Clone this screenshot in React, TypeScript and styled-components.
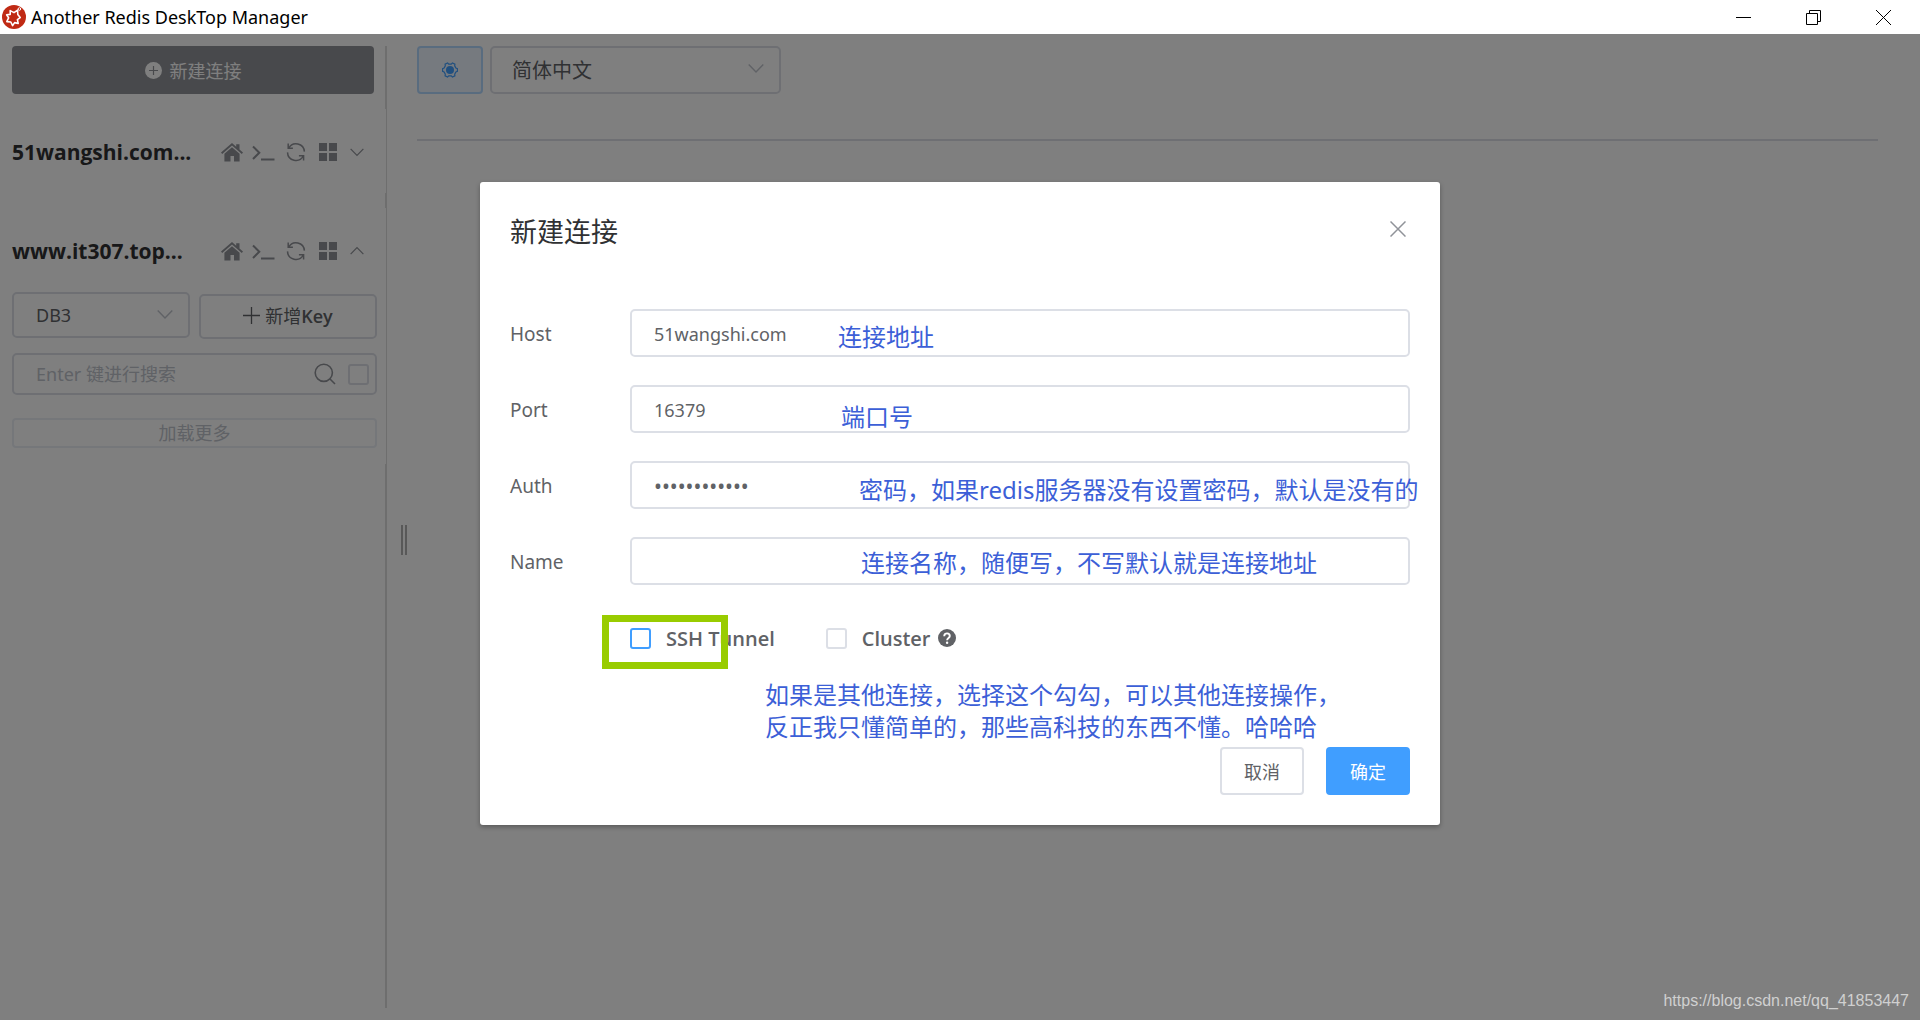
import React from 'react';
import styled, { createGlobalStyle, css } from 'styled-components';

const sans = `"Noto Sans", "Noto Sans CJK SC", sans-serif`;
const semi = `"Open Sans", "Noto Sans CJK SC", sans-serif`;

const GlobalStyle = createGlobalStyle`
  *, *::before, *::after { box-sizing: border-box; }
  body { margin: 0; font-family: ${sans}; color: #606266; background: #fff; }
  button, input, select { font: inherit; color: inherit; margin: 0; }
  button { cursor: pointer; }
`;

const Window = styled.div`
  display: flex;
  flex-direction: column;
  min-height: 100vh;
`;

const TitleBar = styled.header`
  display: flex;
  align-items: center;
  height: 34px;
  padding: 0 2px;
  background: #fff;
  color: #000;
`;

const AppName = styled.h1`
  flex: 1;
  margin: 0;
  padding-left: 5px;
  font-size: 18px;
  line-height: 24px;
  font-weight: 400;
`;

const WindowButton = styled.button`
  display: grid;
  place-items: center;
  width: 70px;
  height: 34px;
  padding: 0;
  border: 0;
  background: none;
`;

const Workspace = styled.div`
  position: relative;
  flex: 1;
  display: flex;
  padding: 12px 0;
`;

const Sidebar = styled.aside`
  display: flex;
  flex-direction: column;
  gap: 15px;
  width: 387px;
  padding-left: 12px;
  border-right: 2px solid #dcdcdc;
`;

const NewConnection = styled.button`
  display: flex;
  align-items: center;
  justify-content: center;
  gap: 8px;
  height: 48px;
  margin-right: 11px;
  border: 0;
  border-radius: 4px;
  background: #909399;
  color: #fff;
  font-size: 18px;
`;

const Connection = styled.section`
  margin-right: -1px;
  background: #fff;
`;

const ConnectionHead = styled.div`
  display: flex;
  align-items: center;
  height: 84px;
  padding: 2px 16px 0 0;
`;

const ConnectionName = styled.h2`
  flex: 1;
  margin: 0;
  color: #303133;
  font-family: ${semi};
  font-size: 21px;
  line-height: 30px;
  font-weight: 700;
  white-space: nowrap;
`;

const IconButton = styled.button<{ $narrow?: boolean }>`
  display: grid;
  place-items: center;
  width: ${p => (p.$narrow ? 26 : 32)}px;
  height: 32px;
  padding: 0;
  border: 0;
  background: none;
  color: #909399;
`;

const KeyTools = styled.div`
  display: grid;
  grid-template-columns: 1fr 1fr;
  column-gap: 9px;
  row-gap: 14px;
  padding: 0 9px 16px 0;
`;

const outlined = css`
  border: 2px solid #dcdfe6;
  border-radius: 5px;
  background: #fff;
`;

const SelectBox = styled.span<{ $wide?: boolean }>`
  position: relative;
  display: block;
  width: ${p => (p.$wide ? '291px' : 'auto')};
  color: #c0c4cc;

  svg {
    position: absolute;
    right: 17px;
    top: 50%;
    margin-top: -10px;
    pointer-events: none;
  }
`;

const Select = styled.select<{ $large?: boolean }>`
  ${outlined}
  appearance: none;
  width: 100%;
  height: ${p => (p.$large ? 48 : 46)}px;
  padding: 0 48px 0 ${p => (p.$large ? 20 : 22)}px;
  color: #606266;
  font-size: ${p => (p.$large ? 20 : 18)}px;
`;

const AddKey = styled.button`
  ${outlined}
  display: flex;
  align-items: center;
  justify-content: center;
  gap: 5px;
  height: 45px;
  margin-top: 2px;
  font-family: ${semi};
  font-size: 18px;
  line-height: 24px;
  padding: 0 0 2px;

  b { font-size: 18px; font-weight: 600; }
`;

const SearchBar = styled.div`
  ${outlined}
  grid-column: 1 / -1;
  display: flex;
  align-items: center;
  gap: 12px;
  height: 42px;
  padding: 0 6px 0 22px;
  color: #909399;
`;

const SearchInput = styled.input`
  flex: 1;
  min-width: 0;
  padding: 0;
  border: 0;
  outline: 0;
  background: none;
  font-size: 18px;

  &::placeholder { color: #c0c4cc; opacity: 1; }
`;

const CheckBox = styled.input<{ $focused?: boolean }>`
  appearance: none;
  width: 21px;
  height: 21px;
  border: 2px solid ${p => (p.$focused ? '#409eff' : '#dcdfe6')};
  border-radius: 3px;
  background: #fff;
`;

const LoadMore = styled.button`
  grid-column: 1 / -1;
  height: 30px;
  margin-top: 9px;
  padding: 0;
  border: 2px solid #ebeef5;
  border-radius: 4px;
  background: #fff;
  color: #c0c4cc;
  font-size: 18px;
  line-height: 24px;
`;

const Splitter = styled.div`
  display: flex;
  align-items: center;
  justify-content: center;
  width: 30px;
  padding: 26px 0 0 4px;
`;

const Grip = styled.span`
  width: 6px;
  height: 30px;
  border: solid #b0b0b0;
  border-width: 0 2px;
`;

const Main = styled.main`
  flex: 1;
  padding-right: 42px;
`;

const Toolbar = styled.div`
  display: flex;
  align-items: center;
  gap: 7px;
  padding-bottom: 45px;
  border-bottom: 2px solid #dcdfe6;
`;

const SettingsButton = styled.button`
  display: grid;
  place-items: center;
  width: 66px;
  height: 48px;
  border: 2px solid #b3d8ff;
  border-radius: 4px;
  background: #ecf5ff;
  color: #409eff;
`;

const Overlay = styled.div`
  position: absolute;
  inset: 0;
  background: rgba(0, 0, 0, 0.5);
`;

const Dialog = styled.section`
  width: 50%;
  margin: 148px auto 0;
  padding: 30px;
  border-radius: 3px;
  background: #fff;
  box-shadow: 0 2px 5px rgba(0, 0, 0, 0.3);
`;

const DialogHead = styled.div`
  display: flex;
  align-items: flex-start;
  justify-content: space-between;
  margin-bottom: 58px;
`;

const DialogTitle = styled.h2`
  margin: 0;
  color: #303133;
  font-size: 27px;
  line-height: 39px;
  font-weight: 400;
`;

const CloseButton = styled.button`
  display: grid;
  place-items: center;
  width: 24px;
  height: 34px;
  padding: 0;
  border: 0;
  background: none;
  color: #909399;
`;

const Form = styled.form`
  display: flex;
  flex-direction: column;
`;

const Field = styled.div`
  position: relative;
  display: flex;
  align-items: center;
  margin-bottom: 28px;
`;

const Label = styled.label`
  width: 120px;
  padding-top: 2px;
  font-size: 19px;
`;

const TextInput = styled.input`
  ${outlined}
  flex: 1;
  height: 48px;
  padding: 2px 22px 0;
  font-size: 18px;
  outline: 0;

  &[type='password'] { font-size: 21px; }
`;

const handwriting = css`
  color: #3c5fd7;
  font-size: 24px;
  line-height: 32px;
  white-space: nowrap;
`;

const Remark = styled.span<{ $x: number; $y: number }>`
  ${handwriting}
  position: absolute;
  left: ${p => p.$x}px;
  top: ${p => p.$y}px;
  pointer-events: none;
`;

const Options = styled.div`
  position: relative;
  display: flex;
  align-items: center;
  gap: 51px;
  height: 48px;
  padding: 2px 0 0 120px;
`;

const Option = styled.label`
  display: flex;
  align-items: center;
  gap: 15px;
  font-family: ${semi};
  font-size: 20px;
  font-weight: 600;
`;

const OptionText = styled.span`
  display: flex;
  align-items: center;
  gap: 7px;
`;

const Highlight = styled.span`
  position: absolute;
  left: 92px;
  top: 2px;
  width: 126px;
  height: 54px;
  border: 7px solid #99cc00;
  pointer-events: none;
`;

const Note = styled.p`
  ${handwriting}
  margin: 18px 0 4px 255px;
`;

const Actions = styled.div`
  display: flex;
  justify-content: flex-end;
  gap: 22px;
`;

const ActionButton = styled.button<{ $primary?: boolean }>`
  width: 84px;
  height: 48px;
  padding: 0;
  border: 2px solid ${p => (p.$primary ? '#409eff' : '#dcdfe6')};
  border-radius: 4px;
  background: ${p => (p.$primary ? '#409eff' : '#fff')};
  color: ${p => (p.$primary ? '#fff' : '#606266')};
  font-size: 18px;
`;

const Watermark = styled.span`
  position: absolute;
  right: 11px;
  bottom: 8px;
  color: #d0d0d0;
  font-family: "Liberation Sans", sans-serif;
  font-size: 16px;
  line-height: 22px;
`;

const Logo = () => (
  <svg width="24" height="24" viewBox="0 0 24 24" aria-hidden="true">
    <circle cx="12" cy="12" r="12" fill="#c02a14" />
    <path
      d="M8.200 5.600 12 7.600 15.600 5.200 15.800 9.400 18.200 12.600 15.400 14.600 16.200 18.400 12.600 17.600 10.600 20.600 8.800 17 4.800 16.600 6.600 12.800 4.600 9.800 8.200 9.400Z"
      fill="none" stroke="#fff" strokeWidth="1.6" strokeLinejoin="round"
    />
    <circle cx="17.4" cy="4" r="1.3" fill="none" stroke="#fff" />
  </svg>
);

const Chevron = ({ up, small }: { up?: boolean; small?: boolean }) => (
  <svg width={small ? 14 : 16} height={small ? 14 : 16} viewBox="0 0 18 18" fill="none" stroke="currentColor" strokeWidth="1.6" aria-hidden="true">
    <path d={up ? 'M.8 13 9 4.6l8.200 8.400' : 'M.8 5 9 13.400 17.200 5'} />
  </svg>
);

const HomeIcon = () => (
  <svg width="22" height="19" viewBox="0 0 22 19" fill="currentColor" aria-hidden="true">
    <path d="M11 0 15.200 3.700V1.300h3.300V6.600L22 9.600l-1.200 1.400L11 2.500 1.200 11 0 9.600Z" />
    <path d="m11 4.200 7.600 6.600V18.500H13V13H9.500v5.500H3.400V10.800Z" />
  </svg>
);

const TerminalIcon = () => (
  <svg width="24" height="18" viewBox="0 0 24 18" fill="none" stroke="currentColor" strokeWidth="2" aria-hidden="true">
    <path d="M1 3.500 7.300 9.700 1 16M9 16.500h13.500" />
  </svg>
);

const RefreshIcon = () => (
  <svg width="20" height="20" viewBox="0 0 20 20" fill="none" stroke="currentColor" strokeWidth="1.500" aria-hidden="true">
    <path d="M2.200 1.500v4.700h4.700M2.700 6A8.400 8.400 0 0 1 18.400 9.600M17.600 18.500v-4.700h-4.700M17.300 14A8.400 8.400 0 0 1 1.500 10.400" />
  </svg>
);

const GridIcon = () => (
  <svg width="18" height="18" viewBox="0 0 18 18" fill="currentColor" aria-hidden="true">
    <path d="M0 0h8v8H0zM10 0h8v8h-8zM0 10h8v8H0zM10 10h8v8h-8z" />
  </svg>
);

const GearIcon = () => (
  <svg width="16" height="16" viewBox="0 0 16 16" fill="none" stroke="currentColor" strokeWidth="1.200" aria-hidden="true">
    <circle cx="8" cy="8" r="4" fill="currentColor" stroke="none" />
    <path d="M5.600.9 6.700 2.100h2.600L10.400.9l2.500 1.300-.2 1.700 1.200 2.100 1.500.6v2.800l-1.500.6-1.200 2.100.2 1.700-2.500 1.300-1.100-1.200H6.700l-1.100 1.200-2.500-1.300.2-1.700L2.100 10 .6 9.400V6.600L2.100 6l1.200-2.100-.2-1.700Z" />
  </svg>
);

interface ConnectionRowProps {
  name: string;
  open?: boolean;
}

const ConnectionRow = ({ name, open }: ConnectionRowProps) => (
  <ConnectionHead>
    <ConnectionName>{name}</ConnectionName>
    <IconButton type="button" aria-label="Home"><HomeIcon /></IconButton>
    <IconButton type="button" aria-label="Console"><TerminalIcon /></IconButton>
    <IconButton type="button" aria-label="Refresh"><RefreshIcon /></IconButton>
    <IconButton type="button" aria-label="Menu"><GridIcon /></IconButton>
    <IconButton type="button" $narrow aria-label="Toggle" aria-expanded={!!open}><Chevron small up={open} /></IconButton>
  </ConnectionHead>
);

const fields = [
  { id: 'host', label: 'Host', type: 'text', value: '51wangshi.com', remark: '连接地址', x: 328, y: 12 },
  { id: 'port', label: 'Port', type: 'text', value: '16379', remark: '端口号', x: 331, y: 16 },
  { id: 'auth', label: 'Auth', type: 'password', value: '123456789012', remark: '密码，如果redis服务器没有设置密码，默认是没有的', x: 349, y: 13 },
  { id: 'name', label: 'Name', type: 'text', value: '', remark: '连接名称，随便写，不写默认就是连接地址', x: 351, y: 10 },
];

export default function App() {
  return (
    <Window>
      <GlobalStyle />
      <TitleBar>
        <Logo />
        <AppName>Another Redis DeskTop Manager</AppName>
        <WindowButton type="button" aria-label="Minimize">
          <svg width="15" height="15" viewBox="0 0 15 15" stroke="#000"><path d="M0 7.500h15" /></svg>
        </WindowButton>
        <WindowButton type="button" aria-label="Restore">
          <svg width="15" height="15" viewBox="0 0 15 15" fill="none" stroke="#000"><path d="M.5 3.500h11v11H.5zM3.500 3.500v-3h11v11h-3" /></svg>
        </WindowButton>
        <WindowButton type="button" aria-label="Close window">
          <svg width="15" height="15" viewBox="0 0 15 15" stroke="#000"><path d="m0 0 15 15M15 0 0 15" /></svg>
        </WindowButton>
      </TitleBar>

      <Workspace>
        <Sidebar>
          <NewConnection type="button">
            <svg width="17" height="17" viewBox="0 0 17 17" aria-hidden="true">
              <circle cx="8.500" cy="8.500" r="8.500" fill="#fff" />
              <path d="M4 8.500h9M8.500 4v9" stroke="#909399" strokeWidth="1.200" />
            </svg>
            新建连接
          </NewConnection>
          <Connection>
            <ConnectionRow name="51wangshi.com..." />
          </Connection>
          <Connection>
            <ConnectionRow name="www.it307.top..." open />
            <KeyTools>
              <SelectBox>
                <Select aria-label="Database" defaultValue="DB3"><option>DB3</option></Select>
                <Chevron />
              </SelectBox>
              <AddKey type="button">
                <svg width="17" height="17" viewBox="0 0 17 17" stroke="currentColor" strokeWidth="1.300" aria-hidden="true">
                  <path d="M0 8.500h17M8.500 0v17" />
                </svg>
                <span>新增<b>Key</b></span>
              </AddKey>
              <SearchBar>
                <SearchInput aria-label="Search keys" placeholder="Enter 键进行搜索" />
                <svg width="22" height="22" viewBox="0 0 22 22" fill="none" stroke="currentColor" strokeWidth="1.600" aria-hidden="true">
                  <circle cx="9.800" cy="9.800" r="8.600" />
                  <path d="m16 16 5 5" />
                </svg>
                <CheckBox type="checkbox" aria-label="Exact search" />
              </SearchBar>
              <LoadMore type="button">加载更多</LoadMore>
            </KeyTools>
          </Connection>
        </Sidebar>

        <Splitter><Grip /></Splitter>

        <Main>
          <Toolbar>
            <SettingsButton type="button" aria-label="Settings"><GearIcon /></SettingsButton>
            <SelectBox $wide>
              <Select $large aria-label="Language" defaultValue="简体中文"><option>简体中文</option></Select>
              <Chevron />
            </SelectBox>
          </Toolbar>
        </Main>

        <Overlay>
          <Dialog role="dialog" aria-labelledby="dialog-title">
            <DialogHead>
              <DialogTitle id="dialog-title">新建连接</DialogTitle>
              <CloseButton type="button" aria-label="Close">
                <svg width="16" height="16" viewBox="0 0 16 16" stroke="currentColor" strokeWidth="1.500"><path d="m.5.5 15 15M15.500.5l-15 15" /></svg>
              </CloseButton>
            </DialogHead>
            <Form onSubmit={e => e.preventDefault()}>
              {fields.map(f => (
                <Field key={f.id}>
                  <Label htmlFor={f.id}>{f.label}</Label>
                  <TextInput id={f.id} type={f.type} defaultValue={f.value} />
                  <Remark $x={f.x} $y={f.y}>{f.remark}</Remark>
                </Field>
              ))}
              <Options>
                <Option>
                  <CheckBox type="checkbox" $focused />
                  SSH Tunnel
                </Option>
                <Option>
                  <CheckBox type="checkbox" />
                  <OptionText>
                    Cluster
                    <svg width="18" height="18" viewBox="0 0 18 18" aria-hidden="true">
                      <circle cx="9" cy="9" r="9" fill="#606266" />
                      <path d="M6.200 7.200C6.200 3.400 11.800 3.600 11.800 7c0 2-2.700 2-2.700 4.200" fill="none" stroke="#fff" strokeWidth="1.900" />
                      <circle cx="9.100" cy="13.700" r="1.200" fill="#fff" />
                    </svg>
                  </OptionText>
                </Option>
                <Highlight />
              </Options>
              <Note>
                如果是其他连接，选择这个勾勾，可以其他连接操作，<br />
                反正我只懂简单的，那些高科技的东西不懂。哈哈哈
              </Note>
              <Actions>
                <ActionButton type="button">取消</ActionButton>
                <ActionButton type="submit" $primary>确定</ActionButton>
              </Actions>
            </Form>
          </Dialog>
          <Watermark>https://blog.csdn.net/qq_41853447</Watermark>
        </Overlay>
      </Workspace>
    </Window>
  );
}
